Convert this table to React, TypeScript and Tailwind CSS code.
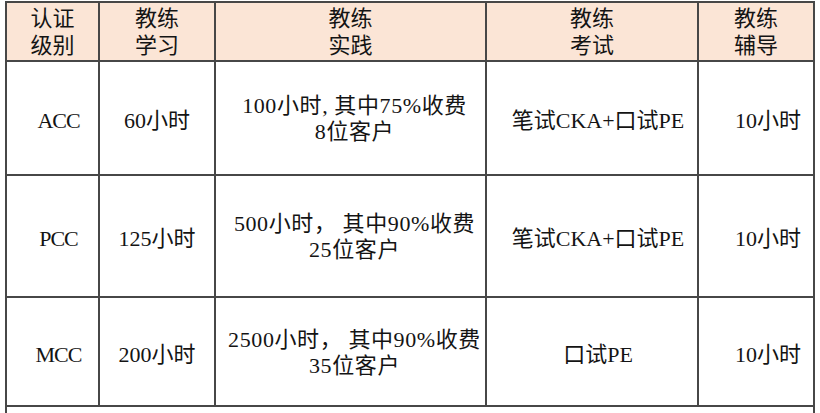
const FONT = "font-['Liberation_Serif','Noto_Sans_CJK_SC',serif]"

const HEADERS = [
  ['认证', '级别'],
  ['教练', '学习'],
  ['教练', '实践'],
  ['教练', '考试'],
  ['教练', '辅导'],
]

const ROWS = [
  {
    level: 'ACC',
    study: '60小时',
    practice: ['100小时, 其中75%收费', '8位客户'],
    exam: '笔试CKA+口试PE',
    mentor: '10小时',
  },
  {
    level: 'PCC',
    study: '125小时',
    practice: ['500小时， 其中90%收费', '25位客户'],
    exam: '笔试CKA+口试PE',
    mentor: '10小时',
  },
  {
    level: 'MCC',
    study: '200小时',
    practice: ['2500小时， 其中90%收费', '35位客户'],
    exam: '口试PE',
    mentor: '10小时',
  },
]

const cell = 'flex flex-col items-center justify-center bg-white text-center'

export default function App() {
  return (
    <div className={`h-[413px] w-[820px] overflow-hidden bg-white pl-[5px] pt-[1px] text-[22px] leading-[26px] text-[#141414] ${FONT}`}>
      <div className="grid w-[810px] grid-cols-[91px_114px_269px_210px_114px] grid-rows-[57px_112px_120px_107px_30px] gap-[2px] bg-[#474747] p-[2px]">
        {HEADERS.map(([a, b], i) => (
          <div key={i} className="flex flex-col items-center justify-center bg-[#fbe5d6] leading-[27px]">
            <span>{a}</span>
            <span>{b}</span>
          </div>
        ))}

        {ROWS.map(row => (
          <div key={row.level} className="contents">
            <div className={`${cell} pl-[12px] pt-[6px] tracking-[-1px]`}>{row.level}</div>
            <div className={`${cell} pt-[6px]`}>{row.study}</div>
            <div className={`${cell} pl-[8px] pt-[2px] tracking-[0.6px]`}>
              <span>{row.practice[0]}</span>
              <span>{row.practice[1]}</span>
            </div>
            <div className={`${cell} pl-[12px] pt-[6px]`}>{row.exam}</div>
            <div className={`${cell} pl-[24px] pt-[6px]`}>{row.mentor}</div>
          </div>
        ))}

        <div className="col-span-5 bg-white" />
      </div>
    </div>
  )
}
